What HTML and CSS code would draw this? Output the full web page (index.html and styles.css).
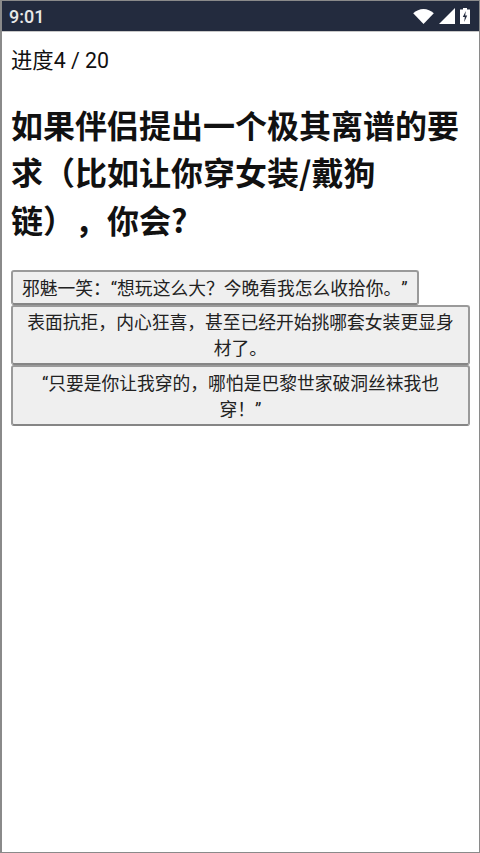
FILE: index.html
```html
<!DOCTYPE html>
<html lang="zh-CN">
<head>
    <meta charset="UTF-8">
    <meta name="viewport" content="width=device-width, initial-scale=1.0">
    <title>测试</title>
    <link rel="stylesheet" href="styles.css">
</head>
<body>
<div class="status-bar">
    <span class="time">9:01</span>
    <div class="status-icons">
        <svg class="icon-wifi" viewBox="0 0 22 16"><path d="M0 4.5C3 1.7 7 0 11 0s8 1.7 11 4.5L11 16z" fill="#fff"/></svg>
        <svg class="icon-signal" viewBox="0 0 16 16"><path d="M16 0v16H0z" fill="#fff"/></svg>
        <svg class="icon-battery" viewBox="0 0 10 16"><path d="M3 0h4v1.500h3V16H0V1.500h3z" fill="#fff"/><path d="M5.800 3 2.800 9h2l-.6 5 3-6.500h-2z" fill="#232b3e"/></svg>
    </div>
</div>

<div class="page">
    <p class="progress">进度4 / 20</p>
    <h2>如果伴侣提出一个极其离谱的要求（比如让你穿女装/戴狗链），你会?</h2>
    <div class="options">
        <button>邪魅一笑：“想玩这么大？今晚看我怎么收拾你。”</button>
        <button>表面抗拒，内心狂喜，甚至已经开始挑哪套女装更显身材了。</button>
        <button>“只要是你让我穿的，哪怕是巴黎世家破洞丝袜我也穿！”</button>
    </div>
</div>
</body>
</html>
```

FILE: styles.css
```css
html,
body {
    height: 100%;
}

body {
    margin: 0;
    display: flex;
    flex-direction: column;
    box-sizing: border-box;
    border: solid #8a8a8a;
    border-width: 1px 1px 1px 2px;
    background-color: white;
    color: #111;
    font-family: Roboto, "Noto Sans CJK SC", sans-serif;
    font-size: 21.33px;
    text-spacing-trim: space-all;
}

.status-bar {
    flex: none;
    display: flex;
    align-items: center;
    justify-content: space-between;
    height: 31px;
    padding: 0 9px 0 7px;
    background-color: #232b3e;
    border-bottom: 1px solid #c8c8c8;
    box-sizing: border-box;
    color: #e8e8e8;
    font-size: 18px;
    font-weight: 500;
}

.status-icons {
    display: flex;
    align-items: center;
    gap: 5px;
}

.icon-wifi {
    width: 21px;
    height: 15px;
}

.icon-signal {
    width: 16px;
    height: 16px;
}

.icon-battery {
    width: 10px;
    height: 16px;
}

.page {
    padding: 0 9px;
}

.progress {
    margin: 16px 0 0;
    line-height: 25px;
}

h2 {
    margin: 27.500px 0 0;
    font-family: "Noto Sans CJK SC", sans-serif;
    font-size: 32px;
    font-weight: bold;
    line-height: 47.5px;
}

.options {
    margin-top: 27px;
}

button {
    display: inline-block;
    vertical-align: top;
    padding: 3.500px 9px 1px;
    border: 2px solid #9a9a9a;
    border-bottom-color: #858585;
    border-radius: 3px;
    background-color: #efefef;
    color: #222;
    font-family: Roboto, "Noto Sans CJK SC", sans-serif;
    font-size: 17.78px;
    line-height: 26px;
    text-spacing-trim: space-all;
}
```
